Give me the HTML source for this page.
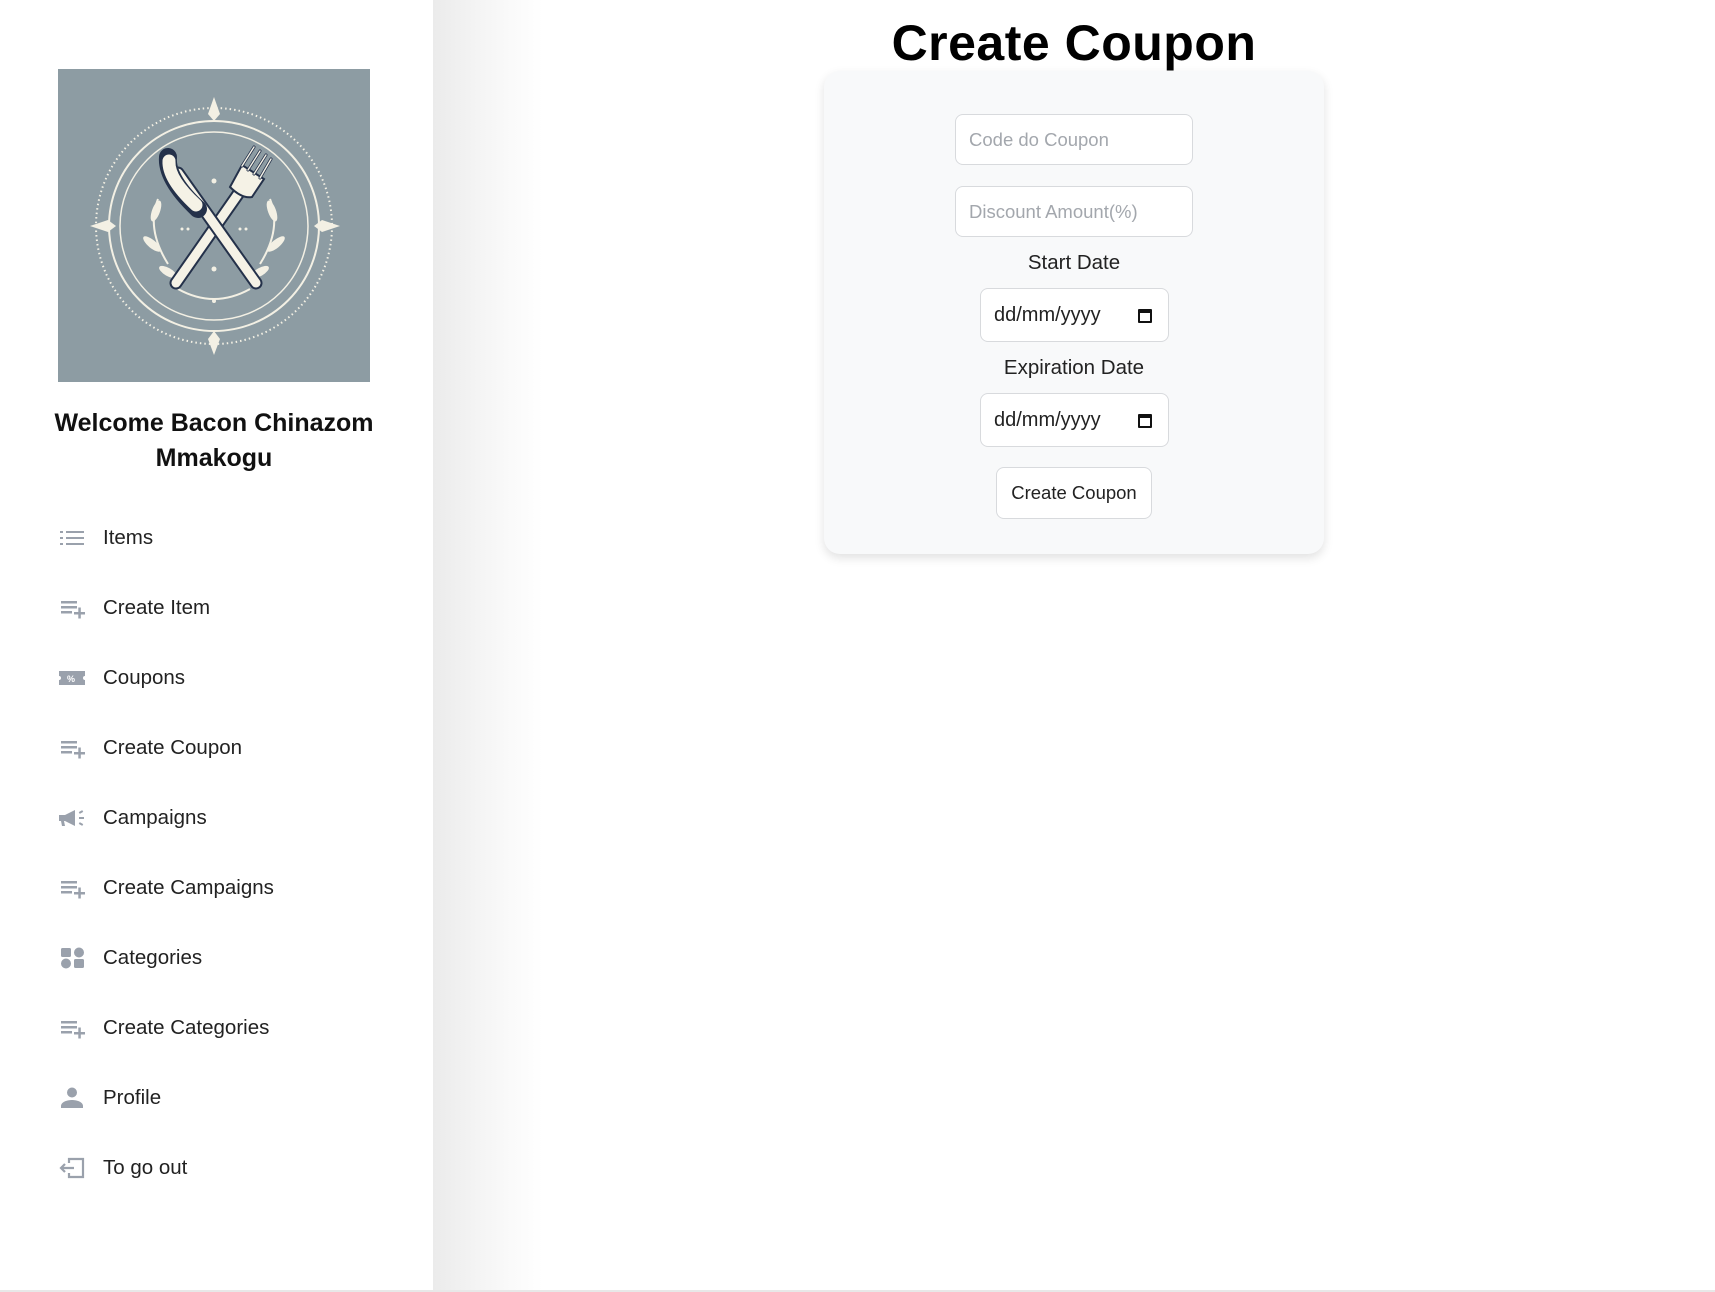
<!DOCTYPE html>
<html><head><meta charset="utf-8"><style>
*{box-sizing:border-box;margin:0;padding:0}
html,body{width:1715px;height:1292px;overflow:hidden;background:#fff;font-family:"Liberation Sans",sans-serif;color:#222}
.side{position:absolute;left:0;top:0;width:433px;height:1290px;background:#fff}
.shade{position:absolute;left:433px;top:0;width:110px;height:1290px;background:linear-gradient(90deg,#ebebeb,#f6f6f6 50%,#fff)}
.bot{position:absolute;left:0;top:1290px;width:1715px;height:2px;background:#e8e8e8}
.logo{position:absolute;left:58px;top:69px;width:312px;height:313px;background:#8d9ca3}
.welcome{position:absolute;left:15px;width:398px;top:406px;text-align:center;font-weight:bold;font-size:25px;line-height:35px;color:#111}
.menu{position:absolute;left:58px;top:503px}
.mi{height:70px;display:flex;align-items:center;font-size:20.5px;color:#222}
.mi svg{width:30px;height:24px;margin-right:15px;flex:none}
h1{position:absolute;left:824px;width:500px;top:14px;text-align:center;font-size:50px;font-weight:bold;color:#000;letter-spacing:.5px}
.card{position:absolute;left:824px;top:71px;width:500px;height:483px;background:#f8f9fa;border-radius:16px;box-shadow:0 4px 10px rgba(0,0,0,.12)}
.in{position:absolute;background:#fff;border:1px solid #d8dadd;border-radius:8px;font-size:18.5px}
.ph{color:#a3a7ad;padding-left:13px;display:flex;align-items:center}
.lbl{position:absolute;width:500px;left:0;text-align:center;font-size:20.5px;color:#222}
.date{display:flex;align-items:center;padding-left:13px;color:#222;font-size:20px}
.cal{position:absolute;right:16px;top:20px;width:14px;height:14px;border:2px solid #111;border-top-width:4px;border-radius:1px}
.btn{display:flex;align-items:center;justify-content:center;font-size:18.5px;color:#222}
</style></head><body>
<div class="side"></div><div class="shade"></div><div class="bot"></div>
<div class="logo"><svg width="312" height="313" viewBox="0 0 312 313">
<g fill="none" stroke="#f3f0e4" stroke-width="2">
<circle cx="156" cy="157" r="118" stroke-dasharray="1.5 3"/>
<circle cx="156" cy="157" r="105"/>
<circle cx="156" cy="157" r="94" stroke-width="1.5"/>
<path d="M120 220 Q156 240 192 220"/>
<path d="M100 130 Q88 160 110 195 M212 130 Q224 160 202 195"/>
</g>
<g fill="#f3f0e4">
<path d="M156 28 L162 45 L156 52 L150 45Z"/><path d="M156 286 L162 270 L156 262 L150 270Z"/>
<path d="M32 157 L50 151 L58 157 L50 163Z"/><path d="M282 157 L264 151 L256 157 L264 163Z"/>
<ellipse cx="98" cy="142" rx="4" ry="11" transform="rotate(20 98 142)"/>
<ellipse cx="214" cy="142" rx="4" ry="11" transform="rotate(-20 214 142)"/>
<ellipse cx="94" cy="175" rx="4" ry="11" transform="rotate(-50 94 175)"/>
<ellipse cx="218" cy="175" rx="4" ry="11" transform="rotate(50 218 175)"/>
<ellipse cx="110" cy="203" rx="4" ry="10" transform="rotate(-60 110 203)"/>
<ellipse cx="202" cy="203" rx="4" ry="10" transform="rotate(60 202 203)"/>
<circle cx="156" cy="112" r="2.5"/><circle cx="156" cy="200" r="2.5"/><circle cx="156" cy="232" r="2"/>
<circle cx="124" cy="160" r="1.5"/><circle cx="130" cy="160" r="1.5"/><circle cx="182" cy="160" r="1.5"/><circle cx="188" cy="160" r="1.5"/>
</g>
<g stroke-linecap="round" fill="none">
<path d="M185 118 L118 214" stroke="#24314a" stroke-width="13"/>
<path d="M185 118 L118 214" stroke="#f5f2e6" stroke-width="9"/>
<path d="M120 104 L198 214" stroke="#24314a" stroke-width="13"/>
<path d="M120 104 L198 214" stroke="#f5f2e6" stroke-width="9"/>
<path d="M110 88 Q108 110 140 140" stroke="#24314a" stroke-width="18"/>
<path d="M111 92 Q110 110 138 136" stroke="#f5f2e6" stroke-width="13"/>
</g>
<path d="M172 118 L184 96 L206 110 L194 128 Q184 130 172 118Z" fill="#f5f2e6" stroke="#24314a" stroke-width="2"/>
<g stroke="#24314a" stroke-width="3" stroke-linecap="round"><path d="M184 97 L196 78 M190 101 L202 82 M196 105 L208 86 M202 109 L213 90"/></g>
<g stroke="#f5f2e6" stroke-width="1.4" stroke-linecap="round"><path d="M184 97 L196 78 M190 101 L202 82 M196 105 L208 86 M202 109 L213 90"/></g>
</svg></div>
<div class="welcome">Welcome Bacon Chinazom<br>Mmakogu</div>
<div class="menu">
<div class="mi"><svg viewBox="0 0 30 24"><g fill="#9aa1ac"><rect x="2" y="5" width="3" height="2"/><rect x="2" y="11" width="3" height="2"/><rect x="2" y="17" width="3" height="2"/><rect x="8" y="5" width="18" height="2"/><rect x="8" y="11" width="18" height="2"/><rect x="8" y="17" width="18" height="2"/></g></svg>Items</div>
<div class="mi"><svg viewBox="0 0 30 24"><g fill="#9aa1ac"><rect x="3" y="5" width="16" height="2.5"/><rect x="3" y="10" width="16" height="2.5"/><rect x="3" y="15" width="11" height="2.5"/><rect x="16" y="16" width="11" height="2.5"/><rect x="20.3" y="11.5" width="2.5" height="11"/></g></svg>Create Item</div>
<div class="mi"><svg viewBox="0 0 30 24"><path fill="#9aa1ac" d="M1 5h26v5a2 2 0 0 0 0 4v5H1v-5a2 2 0 0 0 0-4z"/><text x="9" y="16" font-size="9" fill="#fff" font-weight="bold" font-family="Liberation Sans">%</text></svg>Coupons</div>
<div class="mi"><svg viewBox="0 0 30 24"><g fill="#9aa1ac"><rect x="3" y="5" width="16" height="2.5"/><rect x="3" y="10" width="16" height="2.5"/><rect x="3" y="15" width="11" height="2.5"/><rect x="16" y="16" width="11" height="2.5"/><rect x="20.3" y="11.5" width="2.5" height="11"/></g></svg>Create Coupon</div>
<div class="mi"><svg viewBox="0 0 30 24"><g fill="#9aa1ac"><path d="M1 9h6l10-5v16l-10-5H6l1 5H4l-1-5H1z"/><rect x="21" y="5" width="4" height="2" transform="rotate(-30 23 6)"/><rect x="21" y="11" width="5" height="2"/><rect x="21" y="17" width="4" height="2" transform="rotate(30 23 18)"/></g></svg>Campaigns</div>
<div class="mi"><svg viewBox="0 0 30 24"><g fill="#9aa1ac"><rect x="3" y="5" width="16" height="2.5"/><rect x="3" y="10" width="16" height="2.5"/><rect x="3" y="15" width="11" height="2.5"/><rect x="16" y="16" width="11" height="2.5"/><rect x="20.3" y="11.5" width="2.5" height="11"/></g></svg>Create Campaigns</div>
<div class="mi"><svg viewBox="0 0 30 24"><g fill="#9aa1ac"><rect x="3" y="2" width="10" height="9" rx="1.5"/><circle cx="21" cy="6.5" r="5"/><circle cx="8" cy="17.5" r="5"/><rect x="16" y="13" width="10" height="9" rx="1.5"/></g></svg>Categories</div>
<div class="mi"><svg viewBox="0 0 30 24"><g fill="#9aa1ac"><rect x="3" y="5" width="16" height="2.5"/><rect x="3" y="10" width="16" height="2.5"/><rect x="3" y="15" width="11" height="2.5"/><rect x="16" y="16" width="11" height="2.5"/><rect x="20.3" y="11.5" width="2.5" height="11"/></g></svg>Create Categories</div>
<div class="mi"><svg viewBox="0 0 30 24"><g fill="#9aa1ac"><circle cx="14" cy="6.5" r="5"/><path d="M3 22v-2c0-4 6-6 11-6s11 2 11 6v2z"/></g></svg>Profile</div>
<div class="mi"><svg viewBox="0 0 30 24"><g fill="none" stroke="#9aa1ac" stroke-width="2.2"><path d="M11 7V3h14v18H11v-4"/><path d="M3 12h13M7 8l-4 4 4 4"/></g></svg>To go out</div>
</div>
<h1>Create Coupon</h1>
<div class="card">
<div class="in ph" style="left:131px;top:43px;width:238px;height:51px">Code do Coupon</div>
<div class="in ph" style="left:131px;top:115px;width:238px;height:51px">Discount Amount(%)</div>
<div class="lbl" style="top:180px">Start Date</div>
<div class="in date" style="left:156px;top:217px;width:189px;height:54px">dd/mm/yyyy<span class="cal"></span></div>
<div class="lbl" style="top:285px">Expiration Date</div>
<div class="in date" style="left:156px;top:322px;width:189px;height:54px">dd/mm/yyyy<span class="cal"></span></div>
<div class="in btn" style="left:172px;top:396px;width:156px;height:52px">Create Coupon</div>
</div>
</body></html>
